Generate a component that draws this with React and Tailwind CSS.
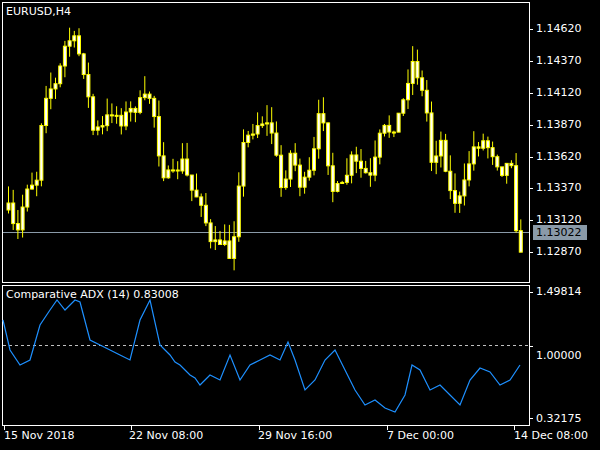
import React from "react";

const pts = [[7,210],[15,240],[25,185],[35,180],[40,120],[45,90],[55,85],[65,40],[72,40],[80,60],[85,80],[90,130],[100,130],[110,110],[120,120],[130,110],[150,95],[160,170],[170,180],[180,160],[190,190],[200,200],[210,250],[220,240],[230,260],[240,150],[250,130],[260,120],[270,130],[280,190],[290,150],[300,190],[310,170],[320,100],[330,190],[340,190],[350,160],[360,170],[370,180],[380,130],[390,130],[400,110],[410,60],[415,70],[425,110],[430,160],[440,140],[450,200],[460,200],[470,150],[480,140],[490,150],[500,170],[510,160],[515,230],[520,262]];
function interp(x){for(let i=0;i<pts.length-1;i++){const [a,b]=pts[i],[c,d]=pts[i+1];if(x>=a&&x<=c)return b+(d-b)*(x-a)/(c-a);}return pts[pts.length-1][1];}
let seed=7;const rnd=()=>{seed=(seed*16807)%2147483647;return seed/2147483647;};
const candles=[];let prev=interp(7);
for(let i=0;i<110;i++){const x=7+i*4.7;const close=interp(x)+(rnd()-0.5)*14;const open=prev;const top=Math.min(open,close),bot=Math.max(open,close);candles.push({x,top,bot,hi:top-rnd()*18,lo:bot+rnd()*12});prev=close;}
const adx=[[3,320],[10,350],[20,365],[30,360],[40,325],[50,310],[57,300],[65,310],[75,300],[80,302],[90,340],[100,345],[110,350],[120,355],[130,360],[140,320],[150,300],[160,345],[165,350],[170,355],[175,362],[180,365],[185,370],[190,375],[195,378],[200,385],[205,380],[210,375],[220,380],[230,355],[240,380],[250,365],[260,360],[270,355],[280,360],[288,342],[295,360],[305,390],[315,380],[325,360],[335,350],[345,370],[355,390],[365,405],[375,400],[385,408],[395,412],[405,395],[412,365],[420,370],[430,390],[440,385],[450,395],[460,405],[470,380],[480,368],[490,372],[500,385],[510,380],[520,365]];

const priceLabels=[["1.14620",29],["1.14370",61],["1.14120",93],["1.13870",125],["1.13620",157],["1.13370",188],["1.13120",220],["1.12870",252]];
const f={fontFamily:'"DejaVu Sans", sans-serif'};

export default function App(){
  return (
    <div className="w-[600px] h-[450px] bg-black text-white text-[11px] relative overflow-hidden" style={f}>
      <svg className="absolute left-0 top-0" width="600" height="450">
        <rect x="2.5" y="2.5" width="527" height="280" fill="none" stroke="white"/>
        <rect x="2.5" y="285.5" width="527" height="140" fill="none" stroke="white"/>
        <line x1="3" y1="232.5" x2="529" y2="232.5" stroke="#8a9aa8"/>
        {candles.map((c,i)=>(
          <g key={i}>
            <line x1={c.x+1.5} x2={c.x+1.5} y1={Math.max(c.hi,4)} y2={Math.min(c.lo,280)} stroke="#ffff00"/>
            <rect x={c.x} y={c.top} width="3" height={Math.max(c.bot-c.top,1)} fill="white" stroke="#ffff00" strokeWidth="1"/>
          </g>
        ))}
        <line x1="3" y1="345.5" x2="529" y2="345.5" stroke="#c0c0c0" strokeDasharray="3 3"/>
        <polyline points={adx.map(p=>p.join(",")).join(" ")} fill="none" stroke="#1e90ff" strokeWidth="1.2"/>
        {priceLabels.map(([t,y])=><line key={t} x1="529" x2="533" y1={y+0.5} y2={y+0.5} stroke="white"/>)}
        {[292,346,418].map(y=><line key={y} x1="529" x2="533" y1={y+0.5} y2={y+0.5} stroke="white"/>)}
        {[4,131,259,387,514].map(x=><line key={x} x1={x+0.5} x2={x+0.5} y1="426" y2="430" stroke="white"/>)}
      </svg>
      <div className="relative flex flex-col h-full">
        <div className="flex h-[283px]">
          <div className="w-[533px] pl-[6px] pt-[4px]">EURUSD,H4</div>
          <div className="relative flex-1">
            {priceLabels.map(([t,y])=><div key={t} className="absolute left-[3px] leading-none" style={{top:y-6}}>{t}</div>)}
            <div className="absolute left-0 top-[225px] w-[54px] h-[15px] bg-[#8a9aa8] text-black pl-[3px] leading-[15px]">1.13022</div>
          </div>
        </div>
        <div className="flex h-[143px]">
          <div className="w-[533px] pl-[6px] pt-[4px]">Comparative ADX (14) 0.83008</div>
          <div className="flex-1 flex flex-col justify-between pl-[3px] pt-[3px] pb-[2px] leading-none">
            <div>1.49814</div>
            <div>1.00000</div>
            <div>0.32175</div>
          </div>
        </div>
        <div className="flex pl-[4px] pt-[2px]">
          <div className="w-[125px]">15 Nov 2018</div>
          <div className="w-[129px]">22 Nov 08:00</div>
          <div className="w-[129px]">29 Nov 16:00</div>
          <div className="w-[127px]">7 Dec 00:00</div>
          <div>14 Dec 08:00</div>
        </div>
      </div>
    </div>
  );
}
